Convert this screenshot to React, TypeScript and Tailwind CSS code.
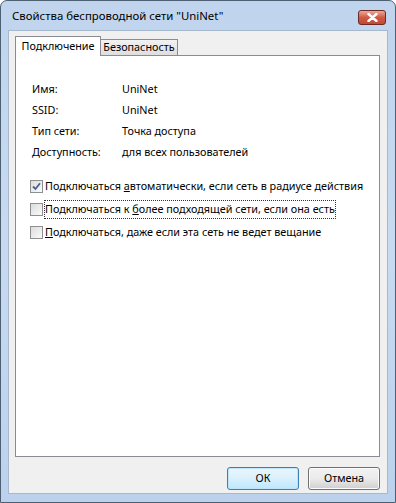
import React from "react";

const font = { fontFamily: '"Noto Sans", "Open Sans", sans-serif' };

function Check({ checked }: { checked?: boolean }) {
  return (
    <div className="w-[13px] h-[13px] border border-[#8e8f8f] bg-gradient-to-br from-[#dcdcdc] to-[#fbfbfb] flex items-center justify-center shrink-0">
      {checked && (
        <svg width="9" height="9" viewBox="0 0 9 9">
          <path d="M1 4.5 L3.5 7 L8 1.2" stroke="#4a5f97" strokeWidth="1.8" fill="none" />
        </svg>
      )}
    </div>
  );
}

export default function App() {
  return (
    <div style={font} className="w-[396px] h-[503px] text-[10.8px] text-black whitespace-nowrap">
      <div className="w-full h-full rounded-t-[7px] border border-[#4d5f73] bg-gradient-to-b from-[#c0d5ed] via-[#c7daf0] to-[#bcd2ec] flex flex-col">
        {/* title bar */}
        <div className="h-[29px] flex items-center pl-[11px] pr-[8px] shrink-0">
          <div className="flex-1 text-[11.4px] leading-none pt-[1px] text-black">Свойства беспроводной сети "UniNet"</div>
          <div className="w-[28px] h-[15px] mt-[4px] mr-[1px] rounded-[3px] border border-[#6b2a22] bg-gradient-to-b from-[#e9a99a] via-[#cf5a45] to-[#c04a35] flex items-center justify-center">
            <svg width="11" height="9" viewBox="0 0 11 9">
              <path d="M1.5 1 L9.5 8 M9.5 1 L1.5 8" stroke="#fff" strokeWidth="2.4" strokeLinecap="round" />
            </svg>
          </div>
        </div>
        {/* body */}
        <div className="flex-1 flex px-[7px] pb-[8px] min-w-0">
          <div className="flex-1 min-w-0 bg-[#f0f0f0] border border-[#a6b8cc] flex flex-col pl-[6px] pr-[7px]">
            {/* tabs */}
            <div className="flex items-end h-[19px] mt-[5px]">
              <div className="h-[20px] w-[86px] bg-white border border-[#898c95] border-b-0 flex items-center justify-center relative top-[1px] z-10">
                Подключение
              </div>
              <div className="h-[16px] w-[77px] bg-gradient-to-b from-[#f2f2f2] to-[#dedede] border border-[#898c95] border-l-0 border-b-0 flex items-center justify-center">
                Безопасность
              </div>
            </div>
            {/* panel */}
            <div className="h-[402px] min-w-0 bg-white border border-[#898c95] pl-[16px] pt-[24px]">
              <div className="grid grid-cols-[90px_1fr] gap-y-[4px] leading-[17px]">
                <div>Имя:</div>
                <div>UniNet</div>
                <div>SSID:</div>
                <div>UniNet</div>
                <div>Тип сети:</div>
                <div>Точка доступа</div>
                <div>Доступность:</div>
                <div>для всех пользователей</div>
              </div>
              <div className="mt-[18px] flex flex-col gap-[6px] -ml-[2px]">
                <div className="flex items-center gap-[2px] h-[17px]">
                  <Check checked />
                  <span>
                    Подключаться <u>а</u>втоматически, если сеть в радиусе действия
                  </span>
                </div>
                <div className="flex items-center gap-[2px] h-[17px]">
                  <Check />
                  <span className="outline outline-1 outline-dotted outline-[#333] outline-offset-0">
                    Подключаться к <u>б</u>олее подходящей сети, если она есть
                  </span>
                </div>
                <div className="flex items-center gap-[2px] h-[17px]">
                  <Check />
                  <span>
                    <u>П</u>одключаться, даже если эта сеть не ведет вещание
                  </span>
                </div>
              </div>
            </div>
            {/* buttons */}
            <div className="flex justify-end gap-[9px] mt-[10px]">
              <button className="w-[72px] h-[23px] rounded-[3px] border border-[#3c7fb1] bg-gradient-to-b from-[#eaf6fd] via-[#d9f0fc] to-[#bee6fd] shadow-[inset_0_0_0_1px_#bde4f8]">
                ОК
              </button>
              <button className="w-[72px] h-[23px] rounded-[3px] border border-[#707070] bg-gradient-to-b from-[#f2f2f2] via-[#ebebeb] to-[#cfcfcf] shadow-[inset_0_0_0_1px_#fcfcfc]">
                Отмена
              </button>
            </div>
          </div>
        </div>
      </div>
    </div>
  );
}
